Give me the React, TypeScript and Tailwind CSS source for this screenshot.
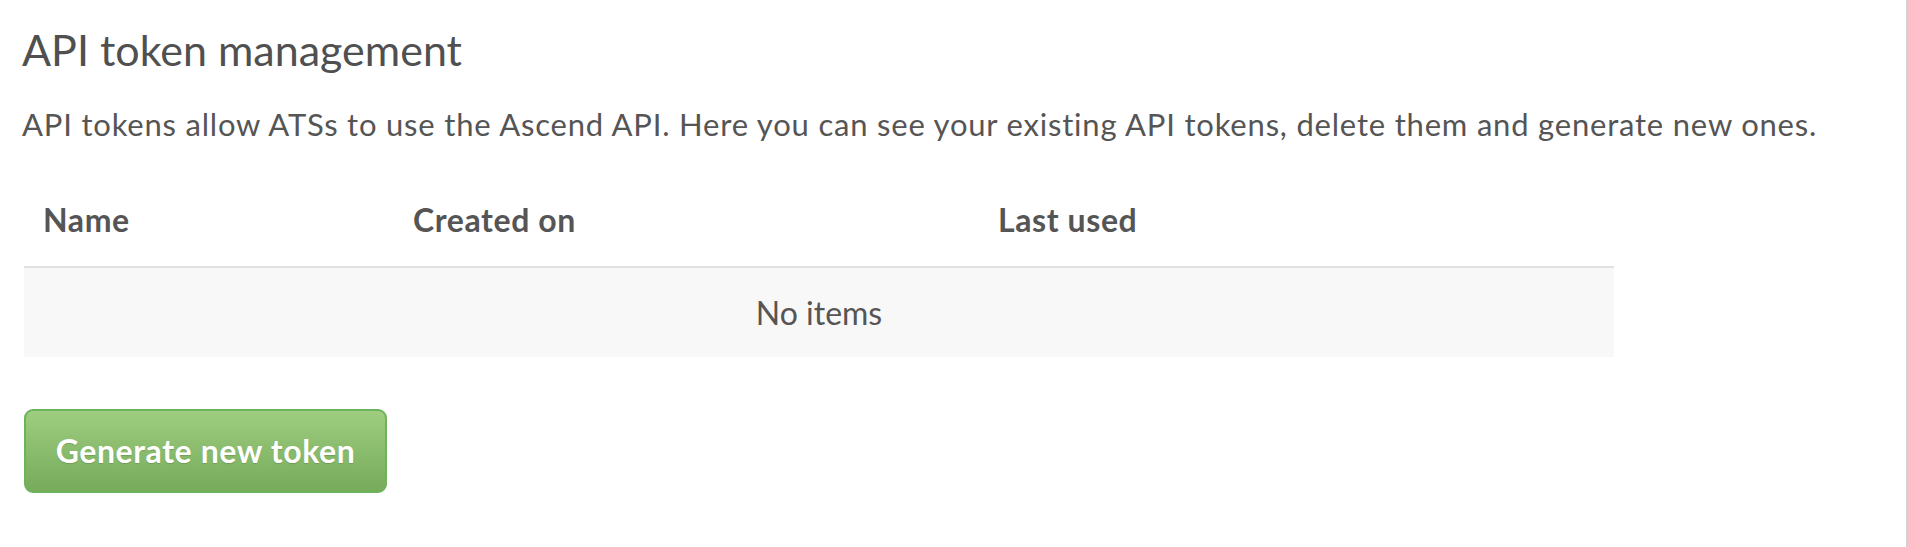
import React from 'react';

const columns = [
    { label: 'Name', width: 'w-[370px]' },
    { label: 'Created on', width: 'w-[585px]' },
    { label: 'Last used', width: '' },
];

export default function App() {
    return (
        <div className="min-h-[547px] w-full bg-white border-r-2 border-[#d2d2d2] font-['Lato',sans-serif] text-[#555]">
            <div className="pl-[22px] pt-[24px] pb-[40px]">
                <h2 className="text-[43px] leading-[52px] font-normal text-[#505050]">API token management</h2>
                <p className="mt-[30px] text-[31px] leading-[36px] tracking-[0.8px]">
                    API tokens allow ATSs to use the Ascend API. Here you can see your existing API tokens, delete them and generate new ones.
                </p>

                <table className="mt-[59px] ml-[2px] w-[1590px] border-collapse">
                    <thead>
                        <tr className="border-b-2 border-[#e2e2e2]">
                            {columns.map(col => (
                                <th
                                    key={col.label}
                                    className={`${col.width} text-left font-bold text-[32px] leading-[38px] tracking-[0.6px] pl-[19px] pb-[27px]`}
                                >
                                    {col.label}
                                </th>
                            ))}
                        </tr>
                    </thead>
                    <tbody>
                        <tr className="bg-[#f8f8f8]">
                            <td colSpan={3} className="h-[90px] text-center text-[32px] leading-[38px]">
                                No items
                            </td>
                        </tr>
                    </tbody>
                </table>

                <button className="mt-[52px] ml-[2px] w-[363px] h-[84px] rounded-[9px] border-2 border-[#6db35c] bg-gradient-to-b from-[#9ecd80] to-[#76ab5a] text-white font-bold text-[32px] leading-[38px] tracking-[0.6px] [text-shadow:0_1px_1px_rgba(0,0,0,0.15)]">
                    Generate new token
                </button>
            </div>
        </div>
    );
}
